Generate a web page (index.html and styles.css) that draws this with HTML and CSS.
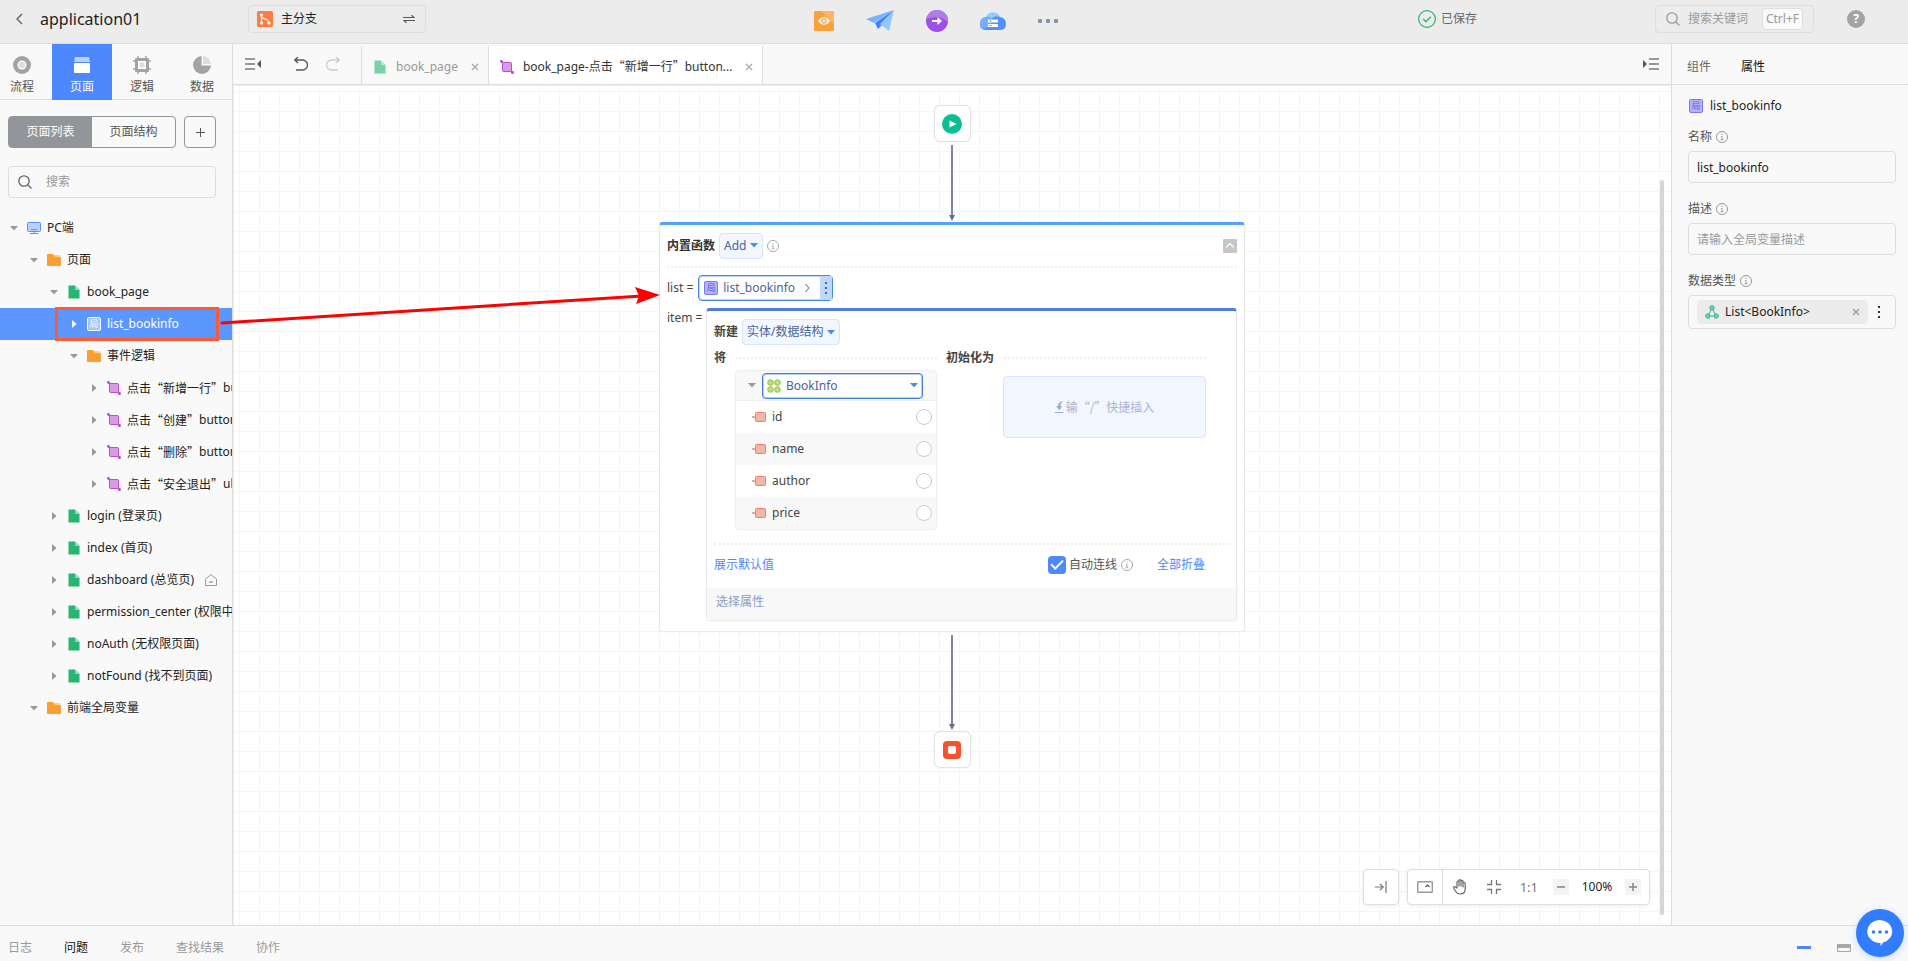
FILE: index.html
```html
<!DOCTYPE html>
<html lang="zh-CN">
<head>
<meta charset="utf-8">
<title>application01</title>
<link rel="stylesheet" href="styles.css">
</head>
<body>
<svg class="defs" aria-hidden="true">
  <symbol id="i-page" viewBox="0 0 12 14"><path fill="#8ed8b4" d="M7 0l5 5v8a1 1 0 0 1-1 1H1a1 1 0 0 1-1-1V1a1 1 0 0 1 1-1z"/><path fill="#26b572" d="M1 1h6v4h4v8H1z"/></symbol>
  <symbol id="i-folder" viewBox="0 0 14 12"><path fill="#ffcf8d" d="M7 1h6v4H7z"/><path fill="#fb9f30" d="M1 0h5l2 3h5a1 1 0 0 1 1 1v7a1 1 0 0 1-1 1H1a1 1 0 0 1-1-1V1a1 1 0 0 1 1-1z"/></symbol>
  <symbol id="i-event" viewBox="0 0 14 14"><rect x="2.500" y="2.500" width="9" height="9" rx="1" fill="#d99be6" stroke="#b24fdc"/><path d="M1 1l2 2M11 11l2 2" stroke="#b24fdc" stroke-width="2"/><circle cx="1.300" cy="1.300" r="1.300" fill="#b24fdc"/><circle cx="12.500" cy="12.500" r="1.500" fill="#b24fdc"/></symbol>
  <symbol id="i-down" viewBox="0 0 8 5"><path fill="currentColor" d="M0 0h8L4 4.500z"/></symbol>
  <symbol id="i-right" viewBox="0 0 5 8"><path fill="currentColor" d="M0 0v8l4.500-4z"/></symbol>
  <symbol id="i-info" viewBox="0 0 12 12"><circle cx="6" cy="6" r="5.500" fill="none" stroke="currentColor"/><path fill="none" stroke="currentColor" d="M6 2.800v1.200M5 5.500h1v3.200M4.800 8.700h2.400"/></symbol>
  <symbol id="i-search" viewBox="0 0 14 14"><circle cx="6" cy="6" r="5.200" fill="none" stroke="currentColor" stroke-width="1.300"/><path stroke="currentColor" stroke-width="1.300" d="M10 10l3.500 3.500"/></symbol>
  <symbol id="i-close" viewBox="0 0 8 8"><path stroke="currentColor" stroke-width="1.300" d="M1 1l6 6M7 1L1 7"/></symbol>
  <symbol id="i-field" viewBox="0 0 14 10"><path stroke="#f2a394" stroke-width="2" d="M0 5h3"/><rect x="3.500" y=".5" width="10" height="9" rx="1" fill="#f4b6ab" stroke="#ee7f69"/></symbol>
  <symbol id="i-kebab" viewBox="0 0 2 12"><path fill="currentColor" d="M0 0h2v2H0zM0 5h2v2H0zM0 10h2v2H0z"/></symbol>
</svg>

<header class="topbar">
  <button class="back" aria-label="返回"><svg width="7" height="12" viewBox="0 0 7 12"><path fill="none" stroke="#666" stroke-width="1.500" d="M6 1L1 6l5 5"/></svg></button>
  <h1 class="app-name">application01</h1>
  <button class="branch">
    <svg width="16" height="16" viewBox="0 0 16 16"><rect width="16" height="16" rx="1.500" fill="#ff7d45"/><g fill="none" stroke="#fff" stroke-width="1.200"><path d="M4.500 4v8M4.500 6.500l6 2.500 1.500 3"/></g><g fill="#fff"><circle cx="4.500" cy="4" r="1.600"/><circle cx="4.500" cy="12" r="1.600"/><circle cx="12" cy="12" r="1.600"/></g></svg>
    <span>主分支</span>
    <svg class="swap" width="12" height="8" viewBox="0 0 12 8"><path fill="none" stroke="#555" stroke-width="1.100" d="M0 2.500h11L8.500 0M12 5.500H1L3.500 8"/></svg>
  </button>
  <nav class="actions">
    <button aria-label="预览"><svg width="20" height="20" viewBox="0 0 20 20"><rect width="20" height="20" rx="1.500" fill="#f9a13c"/><path fill="#ffb565" d="M7 0h11.500A1.500 1.500 0 0 1 20 1.500V13z"/><path fill="#fff" d="M4 10q6-7.500 12 0-6 7.500-12 0z"/><circle cx="10" cy="10" r="2.700" fill="#f9a13c"/><circle cx="10" cy="10" r="1.400" fill="#fff"/></svg></button>
    <button aria-label="发布"><svg width="28" height="22" viewBox="0 0 28 22"><path fill="#74b4ff" d="M28 0L0 9l8 4z"/><path fill="#3f7fff" d="M28 0L9 13l3 6z"/><path fill="#4a88fb" d="M12 19l4-4-2-2z"/><path fill="#93c8ff" d="M28 0L14 14l9 7z"/></svg></button>
    <button aria-label="导出"><svg width="22" height="22" viewBox="0 0 22 22"><circle cx="11" cy="11" r="11" fill="#9d51e4"/><path fill="#b27ce8" d="M3 3.500A11 11 0 0 1 22 12Q13 4 0 9 1 6 3 3.500z"/><path stroke="#fff" stroke-width="2" d="M6 11h7"/><path fill="#fff" d="M11.500 7v8l4.500-4z"/></svg></button>
    <button aria-label="云服务"><svg width="26" height="18" viewBox="0 0 26 18"><circle cx="13" cy="8" r="7.700" fill="#93c9ff"/><path fill="#5590ff" d="M6 5q3-1 5 2 4-4 9-2 6 1 6 7 0 6-6 6H6q-6 0-6-6 0-6 6-7z"/><path fill="#76adff" d="M6 5q4-1 6 2 0 8-9 10-3-2-3-5 0-6 6-7z"/><path fill="#fff" d="M8 7.500h10v3H8zM8 12h10v3H8z"/><path fill="#5590ff" d="M9.500 8.500h2v1h-2zM9.500 13h2v1h-2z"/></svg></button>
    <button aria-label="更多"><svg width="20" height="4" viewBox="0 0 20 4"><g fill="#8592a6"><rect width="4" height="4" rx="1"/><rect x="8" width="4" height="4" rx="1"/><rect x="16" width="4" height="4" rx="1"/></g></svg></button>
  </nav>
  <div class="saved"><svg width="18" height="18" viewBox="0 0 18 18"><circle cx="9" cy="9" r="8.400" fill="none" stroke="#26b572" stroke-width="1.200"/><path fill="none" stroke="#26b572" stroke-width="1.300" d="M5.200 9l2.600 2.700 5-5"/></svg><span>已保存</span></div>
  <label class="global-search"><svg width="14" height="14"><use href="#i-search"/></svg><input type="text" placeholder="搜索关键词" aria-label="搜索关键词"><kbd>Ctrl+F</kbd></label>
  <button class="help" aria-label="帮助">?</button>
</header>

<div class="workspace">
  <aside class="sidebar">
    <nav class="modes">
      <button><svg width="18" height="18" viewBox="0 0 18 18"><circle cx="9" cy="9" r="9" fill="#a2a3a5"/><circle cx="9" cy="9" r="4.500" fill="#fff"/><circle cx="9" cy="9" r="3.200" fill="#ddd"/></svg><span>流程</span></button>
      <button class="active"><svg width="18" height="18" viewBox="0 0 18 18"><path fill="#bcd1ff" d="M2 1h14l1 5H1z"/><rect x="1" y="7" width="16" height="10" rx="1" fill="#fff"/></svg><span>页面</span></button>
      <button><svg width="18" height="18" viewBox="0 0 18 18"><path stroke="#a2a3a5" stroke-width="1.500" d="M5 0v18M13 0v18M0 5h18M0 13h18"/><rect x="2" y="2" width="14" height="14" rx="1" fill="#a2a3a5"/><rect x="5" y="5" width="8" height="8" fill="#fff"/><rect x="6.500" y="6.500" width="5" height="5" fill="#ddd"/></svg><span>逻辑</span></button>
      <button><svg width="18" height="18" viewBox="0 0 18 18"><circle cx="9" cy="9" r="9" fill="#a2a3a5"/><path fill="#f9f9f9" d="M8.500 9.500V0H18v9.500z"/><path fill="#ddd" d="M10 8V0a8.500 8.500 0 0 1 8 8z"/></svg><span>数据</span></button>
    </nav>
    <div class="switcher">
      <div class="segmented"><button class="on">页面列表</button><button>页面结构</button></div>
      <button class="add" aria-label="新增"><svg width="9" height="9" viewBox="0 0 9 9"><path stroke="#555" d="M4.500 0v9M0 4.500h9"/></svg></button>
    </div>
    <label class="tree-search"><svg width="14" height="14"><use href="#i-search"/></svg><input type="text" placeholder="搜索" aria-label="搜索"></label>
    <ul class="tree">
      <li class="l0"><span class="caret"><svg width="8" height="5"><use href="#i-down"/></svg></span><svg class="ico" width="14" height="12" viewBox="0 0 14 12"><rect x=".5" y=".5" width="13" height="9" rx="1" fill="#b9d0ff" stroke="#5590ff"/><path stroke="#5590ff" d="M4 7.500h6M7 9v2M3 11.500h8"/></svg>PC端</li>
      <li class="l1"><span class="caret"><svg width="8" height="5"><use href="#i-down"/></svg></span><svg class="ico" width="14" height="12"><use href="#i-folder"/></svg>页面</li>
      <li class="l2"><span class="caret"><svg width="8" height="5"><use href="#i-down"/></svg></span><svg class="ico" width="14" height="14"><use href="#i-page"/></svg>book_page</li>
      <li class="l3 selected"><span class="caret"><svg width="5" height="8"><use href="#i-right"/></svg></span><span class="ico var inverse">局</span>list_bookinfo<span class="callout"></span></li>
      <li class="l3"><span class="caret"><svg width="8" height="5"><use href="#i-down"/></svg></span><svg class="ico" width="14" height="12"><use href="#i-folder"/></svg>事件逻辑</li>
      <li class="l4"><span class="caret"><svg width="5" height="8"><use href="#i-right"/></svg></span><svg class="ico" width="14" height="14"><use href="#i-event"/></svg><span class="cjk">点击“新增一行”</span>button</li>
      <li class="l4"><span class="caret"><svg width="5" height="8"><use href="#i-right"/></svg></span><svg class="ico" width="14" height="14"><use href="#i-event"/></svg><span class="cjk">点击“创建”</span>button</li>
      <li class="l4"><span class="caret"><svg width="5" height="8"><use href="#i-right"/></svg></span><svg class="ico" width="14" height="14"><use href="#i-event"/></svg><span class="cjk">点击“删除”</span>button</li>
      <li class="l4"><span class="caret"><svg width="5" height="8"><use href="#i-right"/></svg></span><svg class="ico" width="14" height="14"><use href="#i-event"/></svg><span class="cjk">点击“安全退出”</span>ul</li>
      <li class="l2"><span class="caret"><svg width="5" height="8"><use href="#i-right"/></svg></span><svg class="ico" width="14" height="14"><use href="#i-page"/></svg>login (登录页)</li>
      <li class="l2"><span class="caret"><svg width="5" height="8"><use href="#i-right"/></svg></span><svg class="ico" width="14" height="14"><use href="#i-page"/></svg>index (首页)</li>
      <li class="l2"><span class="caret"><svg width="5" height="8"><use href="#i-right"/></svg></span><svg class="ico" width="14" height="14"><use href="#i-page"/></svg>dashboard (总览页)<svg class="home" width="12" height="12" viewBox="0 0 12 12"><path fill="none" stroke="#999" d="M.5 5L6 .7 11.500 5v6.500H.5z"/><path stroke="#bbb" stroke-width="2" d="M4 8h4"/></svg></li>
      <li class="l2"><span class="caret"><svg width="5" height="8"><use href="#i-right"/></svg></span><svg class="ico" width="14" height="14"><use href="#i-page"/></svg>permission_center (权限中心)</li>
      <li class="l2"><span class="caret"><svg width="5" height="8"><use href="#i-right"/></svg></span><svg class="ico" width="14" height="14"><use href="#i-page"/></svg>noAuth (无权限页面)</li>
      <li class="l2"><span class="caret"><svg width="5" height="8"><use href="#i-right"/></svg></span><svg class="ico" width="14" height="14"><use href="#i-page"/></svg>notFound (找不到页面)</li>
      <li class="l1"><span class="caret"><svg width="8" height="5"><use href="#i-down"/></svg></span><svg class="ico" width="14" height="12"><use href="#i-folder"/></svg>前端全局变量</li>
    </ul>
  </aside>

  <main class="editor">
    <div class="editor-bar">
      <div class="tools">
        <button aria-label="收起"><svg width="16" height="12" viewBox="0 0 16 12"><path stroke="#999" stroke-width="2" d="M0 1h10M0 6h10M0 11h10"/><path fill="#555" d="M16 2v8l-4-4z"/></svg></button>
        <button class="undo" aria-label="撤销"><svg width="14" height="14" viewBox="0 0 14 14"><path fill="none" stroke="#555" stroke-width="1.300" d="M2 3h6.500a5 5 0 0 1 0 10H2M4 0L.8 3 4 6"/></svg></button>
        <button aria-label="重做"><svg width="14" height="14" viewBox="0 0 14 14"><path fill="none" stroke="#ccc" stroke-width="1.300" d="M12 3H5.500a5 5 0 0 0 0 10H12M10 0l3.200 3L10 6"/></svg></button>
      </div>
      <div class="tabs">
        <div class="tab"><svg class="dim" width="14" height="14"><use href="#i-page"/></svg><span>book_page</span><button aria-label="关闭"><svg width="8" height="8"><use href="#i-close"/></svg></button></div>
        <div class="tab current"><svg width="14" height="14"><use href="#i-event"/></svg><span>book_page-<span class="cjk">点击“新增一行”</span>button...</span><button aria-label="关闭"><svg width="8" height="8"><use href="#i-close"/></svg></button></div>
      </div>
      <button class="expand" aria-label="展开"><svg width="16" height="12" viewBox="0 0 16 12"><path stroke="#999" stroke-width="2" d="M6 1h10M6 6h10M6 11h10"/><path fill="#555" d="M0 2v8l4-4z"/></svg></button>
    </div>
    <div class="canvas">
      <div class="flow">
        <div class="node"><svg width="20" height="20" viewBox="0 0 20 20"><circle cx="10" cy="10" r="10" fill="#0bbf95"/><path fill="#fff" d="M7.500 6.500v7l7-3.500z"/></svg></div>
        <svg class="link" width="6" height="76" viewBox="0 0 6 76"><path stroke="#7f8898" stroke-width="2" d="M3 0v71"/><path fill="#667085" d="M0 70h6l-3 6z"/></svg>
        <section class="card">
          <div class="card-head"><b>内置函数</b><button class="pick">Add<svg width="8" height="5"><use href="#i-down"/></svg></button><svg class="info" width="12" height="12"><use href="#i-info"/></svg>
            <button class="fold" aria-label="折叠"><svg width="8" height="5" viewBox="0 0 8 5"><path fill="none" stroke="#fff" stroke-width="1.200" d="M0 4.500l4-4 4 4"/></svg></button></div>
          <div class="arg"><span>list =</span><button class="value"><span class="var">局</span><span class="value-name">list_bookinfo</span><svg width="5" height="8" viewBox="0 0 5 8"><path fill="none" stroke="#8fa4c8" stroke-width="1.400" d="M.5 0l3.500 4-3.500 4"/></svg><span class="handle"><svg width="2" height="12"><use href="#i-kebab"/></svg></span></button></div>
          <div class="arg tall"><span class="arg-name">item =</span>
            <div class="inner">
              <div class="inner-head"><b>新建</b><button class="pick">实体/数据结构<svg width="8" height="5"><use href="#i-down"/></svg></button></div>
              <div class="columns">
                <div class="col">
                  <div class="col-title"><b class="short">将</b><i></i></div>
                  <div class="struct">
                    <div class="struct-head"><svg class="grey" width="8" height="5"><use href="#i-down"/></svg>
                      <button class="entity"><svg width="14" height="14" viewBox="0 0 14 14"><g fill="#c1dc86" stroke="#94c03c"><circle cx="3.500" cy="3.500" r="2.800"/><circle cx="10.500" cy="3.500" r="2.800"/><circle cx="3.500" cy="10.500" r="2.800"/><circle cx="10.500" cy="10.500" r="2.800"/></g></svg><span>BookInfo</span><svg class="end" width="8" height="5"><use href="#i-down"/></svg></button></div>
                    <div class="field"><svg width="14" height="10"><use href="#i-field"/></svg><span>id</span><i class="port"></i></div>
                    <div class="field alt"><svg width="14" height="10"><use href="#i-field"/></svg><span>name</span><i class="port"></i></div>
                    <div class="field"><svg width="14" height="10"><use href="#i-field"/></svg><span>author</span><i class="port"></i></div>
                    <div class="field alt"><svg width="14" height="10"><use href="#i-field"/></svg><span>price</span><i class="port"></i></div>
                  </div>
                </div>
                <div class="col init">
                  <div class="col-title"><b>初始化为</b><i></i></div>
                  <div class="slot"><svg width="9" height="12" viewBox="0 0 9 12"><path fill="#9fabc6" d="M8 0Q3 1 3 5H1l3.500 4.500L7 5H5.500Q5 3 8 0z"/><path stroke="#9fabc6" d="M0 11.500h8"/></svg><span class="cjk">输“/”快捷插入</span></div>
                </div>
              </div>
              <div class="inner-foot"><a href="#">展示默认值</a><label class="auto"><input type="checkbox" checked>自动连线</label><svg class="info" width="12" height="12"><use href="#i-info"/></svg><a class="all" href="#">全部折叠</a></div>
              <div class="choose">选择属性</div>
            </div>
          </div>
        </section>
        <svg class="link" width="6" height="95" viewBox="0 0 6 95"><path stroke="#7f8898" stroke-width="2" d="M3 0v90"/><path fill="#667085" d="M0 89h6l-3 6z"/></svg>
        <div class="node"><svg width="18" height="18" viewBox="0 0 18 18"><rect width="18" height="18" rx="4" fill="#f5532f"/><rect x="5" y="5" width="8" height="8" rx="2" fill="#fff"/></svg></div>
      </div>
      <div class="scroll"></div>
      <div class="zoombar">
        <div class="panel"><button aria-label="侧边收起"><svg width="12" height="12" viewBox="0 0 12 12"><path fill="none" stroke="#777" stroke-width="1.200" d="M0 6h8M5 3l3.200 3L5 9M11 0v12"/></svg></button></div>
        <div class="panel">
          <button class="mini" aria-label="小地图"><svg width="16" height="12" viewBox="0 0 16 12"><rect x=".7" y=".7" width="14.600" height="10.600" rx=".5" fill="none" stroke="#999" stroke-width="1.400"/><path fill="none" stroke="#555" stroke-width="1.200" d="M8.500 6L10.500 4l2 2"/></svg></button>
          <button class="hand" aria-label="拖动"><svg width="14" height="16" viewBox="0 0 14 16"><path fill="none" stroke="#666" stroke-width="1.200" stroke-linejoin="round" d="M4 9V3.200q0-1.200 1-1.200t1 1.200V7 1.800Q6 .7 7 .7t1 1.100V7 2.500q0-1.100 1-1.100t1 1.100V8 4.500q0-1.100 1-1.100t1.200 1.100V10q0 5-5 5-3 0-4.500-2.500L.9 9.500q-.7-1.300.3-1.700T3 8.500z"/></svg></button>
          <button aria-label="适应屏幕"><svg width="14" height="14" viewBox="0 0 14 14"><path fill="none" stroke="#777" stroke-width="1.300" d="M0 4.500h4.500V0M9.500 0v4.500H14M0 9.500h4.500V14M9.500 14V9.500H14"/></svg></button>
          <button class="ratio">1:1</button>
          <button class="step" aria-label="缩小"><svg width="8" height="8" viewBox="0 0 8 8"><path stroke="#888" stroke-width="1.600" d="M0 4h8"/></svg></button>
          <span class="percent">100%</span>
          <button class="step" aria-label="放大"><svg width="8" height="8" viewBox="0 0 8 8"><path stroke="#888" stroke-width="1.600" d="M0 4h8M4 0v8"/></svg></button>
        </div>
      </div>
    </div>
  </main>

  <aside class="props">
    <nav class="prop-tabs"><button>组件</button><button class="active">属性</button></nav>
    <form class="prop-body">
      <div class="prop-title"><span class="var">局</span>list_bookinfo</div>
      <div class="prop"><label for="p-name">名称<svg width="12" height="12"><use href="#i-info"/></svg></label><input id="p-name" type="text" value="list_bookinfo"></div>
      <div class="prop"><label for="p-desc">描述<svg width="12" height="12"><use href="#i-info"/></svg></label><input id="p-desc" type="text" placeholder="请输入全局变量描述"></div>
      <div class="prop"><label for="p-type">数据类型<svg width="12" height="12"><use href="#i-info"/></svg></label>
        <div class="type-box"><button id="p-type" type="button" class="type"><svg width="14" height="14" viewBox="0 0 14 14"><path fill="none" stroke="#33b898" d="M7 3L3 11h8z"/><g fill="#6fd0b5" stroke="#33b898"><circle cx="7" cy="2.800" r="2.200"/><circle cx="2.800" cy="11" r="2.200"/><circle cx="11.200" cy="11" r="2.200"/></g></svg><span>List&lt;BookInfo&gt;</span><svg class="x" width="8" height="8"><use href="#i-close"/></svg></button><svg class="dots" width="2" height="12"><use href="#i-kebab"/></svg></div></div>
    </form>
  </aside>
</div>

<footer class="statusbar">
  <nav><button>日志</button><button class="active">问题</button><button>发布</button><button>查找结果</button><button>协作</button></nav>
  <div class="panel-size"><svg width="14" height="3"><rect width="14" height="3" fill="#4d88ff"/></svg><svg width="14" height="8" viewBox="0 0 14 8"><rect x=".5" y=".5" width="13" height="7" fill="#f9f9f9" stroke="#a8a8a8"/><path fill="#a8a8a8" d="M0 0h14v4H0z"/></svg></div>
</footer>

<svg class="pointer" width="442" height="42" viewBox="0 0 442 42" aria-hidden="true"><path stroke="#f00" stroke-width="3" stroke-linecap="round" d="M4 38L424 11"/><path fill="#f00" d="M442 10L417 2l4 9-3 8z"/></svg>
<button class="chat" aria-label="在线咨询"><svg width="26" height="26" viewBox="0 0 26 26"><path fill="#fff" d="M13 0a13 11.500 0 0 1 3 22.500Q15 24 13.500 26V23A13 11.500 0 0 1 13 0z"/><g fill="#327dff"><circle cx="6.500" cy="12" r="1.800"/><circle cx="13" cy="12" r="1.800"/><circle cx="19.500" cy="12" r="1.800"/></g></svg></button>
</body>
</html>
```
FILE: styles.css
```css
* { box-sizing: border-box; }
body {
  margin: 0;
  height: 100vh;
  display: flex;
  flex-direction: column;
  position: relative;
  overflow: hidden;
  background: #f9f9f9;
  color: #333;
  font: 12px/20px "Noto Sans", "Noto Sans CJK SC", sans-serif;
}
button, input { font: inherit; color: inherit; }
button { border: 0; background: none; padding: 0; display: flex; align-items: center; justify-content: center; cursor: pointer; }
input { border: 0; background: none; padding: 0; min-width: 0; outline: 0; }
input::placeholder { color: #999; opacity: 1; }
a { color: #4d88ff; text-decoration: none; }
svg { display: block; flex: none; }
.defs { position: absolute; width: 0; height: 0; }
.cjk { font-family: "Noto Sans CJK SC", sans-serif; }

.topbar { flex: none; height: 44px; display: flex; align-items: center; background: #ececec; border-bottom: 1px solid #ddd; position: relative; padding: 0 43px 5px 16px; }
.app-name { margin: 0; padding-left: 17px; width: 225px; font-size: 16px; font-weight: 400; color: #222; }
.branch { width: 178px; height: 28px; border: 1px solid #ddd; border-radius: 4px; padding: 0 10px 0 8px; gap: 8px; color: #222; }
.branch .swap { margin-left: auto; }
.actions { position: absolute; left: 814px; top: 0; height: 42px; display: flex; align-items: center; gap: 32px; }
.saved { margin-left: auto; display: flex; align-items: center; gap: 5px; color: #666; width: 237px; }
.global-search { width: 159px; height: 28px; border: 1px solid #ddd; border-radius: 4px; display: flex; align-items: center; padding: 0 10px; gap: 8px; color: #999; }
.global-search input { flex: 1; }
kbd { font: inherit; line-height: 20px; background: #fafafa; border: 1px solid #ddd; border-radius: 4px; padding: 0 3px; }
.help { width: 18px; height: 18px; border-radius: 50%; background: #a2a3a5; color: #fff; font-weight: 700; margin-left: 33px; }

.workspace { flex: 1; display: flex; min-height: 0; }
.sidebar { width: 233px; flex: none; border-right: 1px solid #ddd; overflow: hidden; }
.modes { height: 56px; display: flex; border-bottom: 1px solid #ddd; margin-left: -8px; }
.modes button { width: 60px; flex: none; height: 56px; flex-direction: column; justify-content: flex-start; padding-top: 12px; gap: 3px; color: #555; }
.modes .active { background: #4d88ff; color: #fff; }
.switcher { display: flex; gap: 8px; padding: 16px 8px 0; }
.segmented { display: flex; width: 168px; border: 1px solid #929599; border-radius: 4px; }
.segmented button { flex: 1; height: 30px; color: #555; }
.segmented .on { background: #929599; color: #fff; }
.add { width: 32px; height: 32px; border: 1px solid #929599; border-radius: 4px; }
.tree-search { display: flex; align-items: center; gap: 14px; margin: 18px 16px 14px 8px; height: 32px; border: 1px solid #ddd; border-radius: 4px; padding: 0 9px; color: #666; }
.tree-search input { flex: 1; }
.tree { list-style: none; margin: 0; padding: 0; }
.tree li { height: 32px; display: flex; align-items: center; white-space: nowrap; color: #222; }
.tree .l0 { padding-left: 9px; }
.tree .l1 { padding-left: 29px; }
.tree .l2 { padding-left: 49px; }
.tree .l3 { padding-left: 69px; }
.tree .l4 { padding-left: 89px; }
.caret { width: 10px; display: flex; justify-content: center; color: #999; flex: none; }
.tree .ico { margin: 0 6px 0 8px; }
.tree .selected { background: #5c96ff; color: #fff; position: relative; }
.selected .caret { color: #fff; }
.callout { position: absolute; left: 55px; top: -1px; width: 164px; height: 34px; border: 3px solid #fe5a36; }
.home { margin-left: 11px; }
.var { width: 14px; height: 14px; flex: none; border: 1px solid #7b77f5; border-radius: 2px; background: #b5b3fb; color: #5f5af0; font-size: 9px; line-height: 12px; text-align: center; }
.var.inverse { border-color: #fff; background: #a6c5ff; color: #fff; }

.editor { flex: 1; min-width: 0; display: flex; flex-direction: column; }
.editor-bar { height: 41px; flex: none; display: flex; border-bottom: 1px solid #ddd; padding: 2px 12px 0; }
.tools { width: 116px; display: flex; align-items: center; gap: 18px; padding-bottom: 2px; }
.tools .undo { margin-left: 15px; }
.tabs { display: flex; }
.tab { display: flex; align-items: center; border-left: 1px solid #ddd; padding: 3px 9px 0 11px; gap: 9px; color: #999; }
.tab button { color: #aaa; margin-left: 4px; }
.tab .dim { opacity: .6; }
.tab.current { background: #fff; color: #333; border-right: 1px solid #ddd; }
.expand { margin-left: auto; padding-bottom: 2px; }
.canvas {
  flex: 1;
  position: relative;
  overflow: hidden;
  background-color: #fff;
  background-image: linear-gradient(#f5f5f5 1px, transparent 1px), linear-gradient(90deg, #f5f5f5 1px, transparent 1px);
  background-position: 0 6px, 6px 0;
  background-size: 20px 20px;
  box-shadow: inset 1px 1px 1px #eee;
}
.flow { display: flex; flex-direction: column; align-items: center; padding-top: 20px; }
.node { width: 37px; height: 37px; border: 1px solid #e2e2e2; border-radius: 6px; background: #fff; display: flex; align-items: center; justify-content: center; box-shadow: 0 0 2px #eee; }
.link { margin: 3px 0 1px; }
.card { width: 586px; background: #fff; border: 1px solid #e8e8e8; border-top: 3px solid #4fa3fb; border-radius: 4px; padding: 0 7px 10px; box-shadow: 0 0 2px #eee; }
.card-head { display: flex; align-items: center; gap: 4px; height: 43px; border-bottom: 2px dotted #eee; }
.pick { height: 26px; background: #f1f6ff; border: 1px solid #d5e5ff; border-radius: 4px; color: #4e6396; padding: 0 4px; gap: 4px; }
.pick svg, .entity .end { color: #4d8fd6; }
.info { color: #aaa; }
.fold { margin-left: auto; width: 14px; height: 14px; border-radius: 1px; background: #c6c6c6; }
.arg { display: flex; align-items: center; gap: 5px; height: 40px; color: #444; }
.arg.tall { height: auto; align-items: flex-start; gap: 0; }
.arg-name { width: 39px; flex: none; }
.value { height: 26px; border: 1px solid #4d88e0; border-radius: 4px; background: #fff; color: #4e6396; padding-left: 5px; box-shadow: inset 0 0 0 1px #b8d0f5; }
.value-name { margin: 0 10px 0 5px; }
.handle { width: 12px; height: 24px; margin-left: 10px; background: #bdd7ff; display: flex; align-items: center; justify-content: center; }
.inner { flex: 1; min-width: 0; border: 1px solid #e8e8e8; border-top: 3px solid #4f7ddb; border-radius: 4px; box-shadow: 0 0 2px #eee; }
.inner-head { display: flex; align-items: center; gap: 4px; padding: 8px 7px 0; }
.columns { display: flex; gap: 9px; margin: 3px 7px 0; padding-bottom: 13px; border-bottom: 2px dotted #eee; }
.col { width: 223px; }
.col.init { width: 260px; }
.col-title { display: flex; align-items: center; gap: 10px; height: 20px; }
.col-title i { flex: 1; border-top: 2px dotted #eee; }
.col-title .short { width: 12px; }
.struct { margin-left: 21px; margin-top: 2px; border: 1px solid #eee; border-radius: 4px; overflow: hidden; }
.struct-head { display: flex; align-items: center; gap: 6px; height: 30px; padding: 0 13px 0 12px; background: #f8f8f8; border-bottom: 1px solid #eee; }
.grey { color: #999; }
.entity { flex: 1; height: 26px; border: 1px solid #3f7fe0; border-radius: 4px; background: #fff; color: #4e6396; gap: 5px; padding: 0 4px; box-shadow: inset 0 0 0 1px #b8d0f5; }
.entity .end { margin-left: auto; }
.field { display: flex; align-items: center; height: 32px; padding: 0 4px 0 16px; gap: 6px; }
.alt { background: #f8f8f8; }
.port { margin-left: auto; width: 16px; height: 16px; border: 1px solid #ccc; border-radius: 50%; background: #fff; }
.slot { margin: 8px 0 0 57px; height: 62px; display: flex; align-items: center; justify-content: center; gap: 2px; background: #f1f6ff; border: 1px solid #d5e5ff; border-radius: 4px; color: #a9b5cf; }
.inner-foot { height: 43px; display: flex; align-items: center; padding: 0 31px 4px 7px; gap: 4px; color: #555; }
.auto { margin-left: auto; display: flex; align-items: center; gap: 3px; }
.auto input { appearance: none; width: 18px; height: 18px; margin: 0; border-radius: 4px; background: #4d88ff; display: grid; place-items: center; }
.auto input::after { content: ""; width: 10px; height: 5px; border: solid #fff; border-width: 0 0 2px 2px; transform: rotate(-45deg) translate(1px, -1px); }
.all { margin-left: 20px; }
.choose { height: 32px; padding: 4px 9px; background: #f8f8f8; color: #8b9cc4; }
.scroll { position: absolute; right: 7px; top: 95px; bottom: 10px; width: 4px; border-radius: 2px; background: #d6d6d6; }
.zoombar { position: absolute; right: 21px; bottom: 20px; display: flex; gap: 8px; }
.panel { display: flex; align-items: center; height: 36px; min-width: 36px; justify-content: center; background: #fff; border: 1px solid #ddd; border-radius: 4px; box-shadow: 0 1px 4px #eee; }
.panel .mini { width: 35px; height: 34px; border-right: 1px solid #ddd; }
.panel .hand { margin: 0 20px 0 10px; }
.ratio { margin: 0 15px 0 19px; font-size: 13px; color: #777; }
.step { width: 16px; height: 16px; background: #f3f3f3; border-radius: 2px; }
.percent { width: 56px; text-align: center; color: #222; }
.step:last-child { margin-right: 8px; }

.props { width: 237px; flex: none; border-left: 1px solid #ddd; }
.prop-tabs { height: 41px; display: flex; gap: 30px; border-bottom: 1px solid #ddd; padding: 5px 15px 0; color: #666; }
.prop-tabs .active { color: #111; }
.prop-body { padding: 10px 12px 0 16px; display: flex; flex-direction: column; }
.prop-title { display: flex; align-items: center; gap: 7px; color: #222; height: 22px; padding-left: 1px; margin-bottom: 10px; }
.prop { display: flex; flex-direction: column; margin-bottom: 16px; }
.prop label { display: flex; align-items: center; gap: 4px; height: 20px; margin-bottom: 4px; color: #555; }
.prop label svg { color: #999; }
.prop input { height: 32px; border: 1px solid #ddd; border-radius: 4px; padding: 0 8px; color: #222; }
.type-box { height: 34px; border: 1px solid #ddd; border-radius: 4px; display: flex; align-items: center; padding: 0 15px 0 8px; }
.type { flex: 1; height: 24px; border-radius: 4px; background: #ececec; padding: 0 8px; gap: 6px; color: #222; }
.type .x { margin-left: auto; color: #999; }
.dots { margin-left: 10px; color: #333; }

.statusbar { flex: none; height: 36px; border-top: 1px solid #ddd; display: flex; align-items: center; justify-content: space-between; padding: 8px 57px 0 8px; }
.statusbar nav { display: flex; gap: 32px; color: #999; }
.statusbar .active { color: #111; }
.panel-size { display: flex; align-items: center; gap: 26px; }
.pointer { position: absolute; left: 218px; top: 285px; pointer-events: none; }
.chat { position: absolute; right: 4px; bottom: 4px; width: 48px; height: 48px; border-radius: 50%; background: #327dff; box-shadow: 0 2px 10px #c9dcff; }
```
